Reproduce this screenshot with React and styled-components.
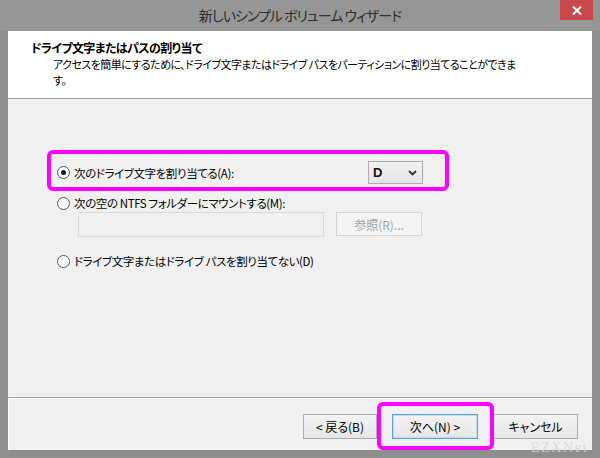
import React from "react";
import styled, { createGlobalStyle } from "styled-components";

const GlobalStyle = createGlobalStyle`
  html, body {
    margin: 0;
    padding: 0;
    background: #8f8f8f;
  }
  body {
    font-family: "Noto Sans CJK JP", "Noto Sans", sans-serif;
    font-feature-settings: "palt";
  }
`;

const Frame = styled.div`
  position: relative;
  width: 600px;
  height: 458px;
  box-sizing: border-box;
  background: #8f8f8f;
  display: flex;
  flex-direction: column;
  overflow: hidden;
`;

const TitleBar = styled.div`
  height: 31px;
  display: grid;
  grid-template-columns: 1fr auto 1fr;
  background: #969696;
`;

const TitleText = styled.div`
  grid-column: 2;
  align-self: center;
  margin-top: -2px;
  font-size: 14px;
  line-height: 20px;
  color: #2e2e2e;
  letter-spacing: -1px;
`;

const CloseButton = styled.div`
  grid-column: 3;
  justify-self: end;
  width: 33px;
  height: 20px;
  margin-right: 7px;
  background: #c9494d;
  display: flex;
  align-items: center;
  justify-content: center;
`;

const Client = styled.div`
  flex: 1;
  margin: 0 8px 8px 8px;
  display: flex;
  flex-direction: column;
  background: #f0f0f0;
`;

const Header = styled.div`
  height: 68px;
  box-sizing: border-box;
  background: #ffffff;
  border-bottom: 1px solid #a0a0a0;
  padding: 9px 0 0 23px;
`;

const HeaderTitle = styled.div`
  font-size: 12px;
  line-height: 16px;
  font-weight: 700;
  letter-spacing: -0.6px;
  color: #000;
`;

const HeaderSub = styled.div`
  padding-left: 22px;
  font-size: 11px;
  line-height: 16px;
  letter-spacing: -0.55px;
  color: #000;
`;

const Body = styled.div`
  flex: 1;
  padding: 62px 0 0 49px;
  display: flex;
  flex-direction: column;
`;

const Row = styled.div`
  display: flex;
  align-items: center;
  width: 366px;
  margin-top: ${(p) => p.top || 0}px;
`;

const RadioLabel = styled.label`
  display: flex;
  align-items: center;
  gap: 4px;
  font-size: 11.5px;
  line-height: 16px;
  letter-spacing: -0.4px;
  color: #000;
`;

const Radio = styled.span`
  width: 11px;
  height: 11px;
  border-radius: 50%;
  border: 1px solid #555;
  background: #fff;
  display: flex;
  align-items: center;
  justify-content: center;
  &::after {
    content: "";
    width: 5px;
    height: 5px;
    border-radius: 50%;
    background: ${(p) => (p.checked ? "#1a1a1a" : "transparent")};
  }
`;

const Combo = styled.div`
  margin-left: auto;
  width: 55px;
  height: 23px;
  box-sizing: border-box;
  border: 1px solid #acacac;
  background: linear-gradient(#f2f2f2, #e5e5e5);
  display: flex;
  align-items: center;
  justify-content: space-between;
  padding: 0 5px 0 4px;
  font-size: 13px;
  font-weight: 700;
  color: #111;
  font-family: "Liberation Sans", sans-serif;
`;

const FolderRow = styled.div`
  display: flex;
  align-items: flex-start;
  gap: 12px;
  margin: 1px 0 0 21px;
`;

const TextField = styled.div`
  width: 246px;
  height: 25px;
  box-sizing: border-box;
  border: 1px solid #d9d9d9;
  background: #f0f0f0;
`;

const Button = styled.div`
  width: ${(p) => p.w}px;
  height: ${(p) => p.h || 25}px;
  box-sizing: border-box;
  border: 1px solid ${(p) => (p.focus ? "#5c9fd8" : p.disabled ? "#d5d5d5" : "#acacac")};
  box-shadow: ${(p) => (p.focus ? "inset 0 0 0 1px #c4e0f7" : "none")};
  background: ${(p) => (p.disabled ? "#f4f4f4" : "linear-gradient(#f3f3f3, #e6e6e6)")};
  display: flex;
  align-items: center;
  justify-content: center;
  font-size: 12px;
  color: ${(p) => (p.disabled ? "#a2a2a2" : "#000")};
`;

const Footer = styled.div`
  height: 53px;
  box-sizing: border-box;
  border-top: 1px solid #a0a0a0;
  box-shadow: inset 0 1px 0 #ffffff, inset 1px 0 0 #ffffff;
  display: flex;
  justify-content: flex-end;
  align-items: flex-start;
  padding: 16px 14px 0 0;
  gap: 15px;
`;

const Highlight = styled.div`
  position: absolute;
  left: ${(p) => p.x}px;
  top: ${(p) => p.y}px;
  width: ${(p) => p.w}px;
  height: ${(p) => p.h}px;
  box-sizing: border-box;
  border: 4px solid #ff00ff;
  border-radius: 6px;
  pointer-events: none;
`;

const Watermark = styled.div`
  position: absolute;
  left: 531px;
  top: 441px;
  font-family: "Liberation Serif", serif;
  font-size: 14px;
  line-height: 14px;
  letter-spacing: 1.6px;
  color: rgba(215, 215, 215, 0.85);
  pointer-events: none;
`;

export default function App() {
  return (
    <>
      <GlobalStyle />
      <Frame>
        <TitleBar>
          <TitleText>新しいシンプル ボリューム ウィザード</TitleText>
          <CloseButton>
            <svg width="10" height="9" viewBox="0 0 10 9">
              <path d="M1 0.5 L9 8.5 M9 0.5 L1 8.5" stroke="#fff" strokeWidth="2" />
            </svg>
          </CloseButton>
        </TitleBar>
        <Client>
          <Header>
            <HeaderTitle>ドライブ文字またはパスの割り当て</HeaderTitle>
            <HeaderSub>
              アクセスを簡単にするために、ドライブ文字またはドライブ パスをパーティションに割り当てることができま
              <br />
              す。
            </HeaderSub>
          </Header>
          <Body>
            <Row>
              <RadioLabel>
                <Radio checked />
                次のドライブ文字を割り当てる(A):
              </RadioLabel>
              <Combo>
                D
                <svg width="9" height="6" viewBox="0 0 9 6">
                  <path d="M1 1 L4.5 4.5 L8 1" stroke="#333" strokeWidth="1.8" fill="none" />
                </svg>
              </Combo>
            </Row>
            <Row top={11}>
              <RadioLabel>
                <Radio />
                次の空の NTFS フォルダーにマウントする(M):
              </RadioLabel>
            </Row>
            <FolderRow>
              <TextField />
              <Button w={86} h={24} disabled>
                参照(R)...
              </Button>
            </FolderRow>
            <Row top={16}>
              <RadioLabel>
                <Radio />
                ドライブ文字またはドライブ パスを割り当てない(D)
              </RadioLabel>
            </Row>
          </Body>
          <Footer>
            <Button w={74}>&lt; 戻る(B)</Button>
            <Button w={86} focus>
              次へ(N) &gt;
            </Button>
            <Button w={85}>キャンセル</Button>
          </Footer>
        </Client>
        <Highlight x={47} y={150} w={402} h={41} />
        <Highlight x={377} y={402} w={117} h={48} />
        <Watermark>EZXNet</Watermark>
      </Frame>
    </>
  );
}
